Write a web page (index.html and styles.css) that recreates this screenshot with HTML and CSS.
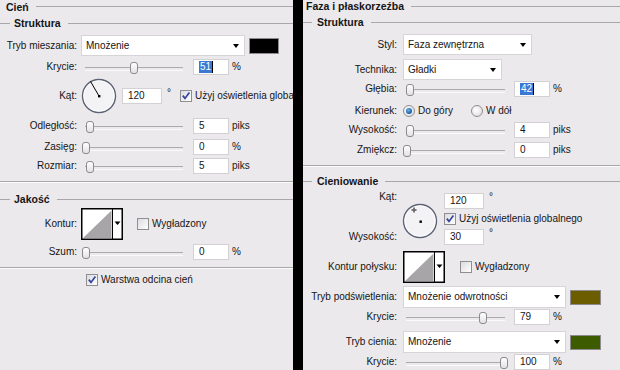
FILE: index.html
```html
<!DOCTYPE html>
<html lang="pl">
<head>
<meta charset="utf-8">
<title>Style warstwy</title>
<link rel="stylesheet" href="styles.css">
</head>
<body>
<div class="app">
  <section class="panel panel-left">
    <div class="title">Cień</div>
    <div class="group">Struktura</div>

    <div class="row r-blend">
      <span class="lbl">Tryb mieszania:</span>
      <div class="select w-blend"><span>Mnożenie</span><i class="caret"></i></div>
      <span class="swatch sw-black"></span>
    </div>

    <div class="row r-opac">
      <span class="lbl">Krycie:</span>
      <div class="slider"><span class="thumb" style="left:48px"></span></div>
      <span class="field"><span class="sel">51</span></span>
      <span class="unit">%</span>
    </div>

    <div class="row r-angle">
      <span class="lbl">Kąt:</span>
      <svg class="dial" width="36" height="36" viewBox="0 0 36 36">
        <circle cx="18" cy="18" r="16.5" fill="#f3f2f5" stroke="#5b6275" stroke-width="1.4"/>
        <circle cx="18" cy="18" r="15.2" fill="none" stroke="#ffffff" stroke-width="0.8"/>
        <line x1="18" y1="18" x2="9.5" y2="3.4" stroke="#000" stroke-width="1"/>
        <rect x="17" y="17" width="2.4" height="2.4" fill="#000"/>
      </svg>
      <span class="field w40">120</span>
      <span class="deg">°</span>
      <span class="cb on cb-global"><svg viewBox="0 0 12 12" width="12" height="12"><path d="M2.8 5.6 L5 8.4 L9.4 2.6" fill="none" stroke="#34449a" stroke-width="1.7"/></svg></span>
      <span class="cbtext">Użyj oświetlenia globalnego</span>
    </div>

    <div class="row r-dist">
      <span class="lbl">Odległość:</span>
      <div class="slider"><span class="thumb" style="left:4px"></span></div>
      <span class="field">5</span>
      <span class="unit">piks</span>
    </div>

    <div class="row r-spread">
      <span class="lbl">Zasięg:</span>
      <div class="slider"><span class="thumb" style="left:0px"></span></div>
      <span class="field">0</span>
      <span class="unit">%</span>
    </div>

    <div class="row r-size">
      <span class="lbl">Rozmiar:</span>
      <div class="slider"><span class="thumb" style="left:4px"></span></div>
      <span class="field">5</span>
      <span class="unit">piks</span>
    </div>

    <div class="sep s-left1"></div>
    <div class="group g-quality">Jakość</div>

    <div class="row r-contour">
      <span class="lbl">Kontur:</span>
      <svg class="contour" width="42" height="32" viewBox="0 0 42 32">
        <rect x="0.75" y="0.75" width="40.5" height="30.5" fill="#fff" stroke="#000" stroke-width="1.5"/>
        <polygon points="2,30 30.5,2.5 30.5,30" fill="#a7a5a8"/>
        <line x1="31.5" y1="1" x2="31.5" y2="31" stroke="#000" stroke-width="1"/>
        <polygon points="33.5,13.5 39.5,13.5 36.5,17" fill="#000"/>
      </svg>
      <span class="cb cb-smooth"></span>
      <span class="cbtext">Wygładzony</span>
    </div>

    <div class="row r-noise">
      <span class="lbl">Szum:</span>
      <div class="slider"><span class="thumb" style="left:0px"></span></div>
      <span class="field">0</span>
      <span class="unit">%</span>
    </div>

    <div class="sep s-left2"></div>

    <div class="row r-knock">
      <span class="cb on cb-knock"><svg viewBox="0 0 12 12" width="12" height="12"><path d="M2.8 5.6 L5 8.4 L9.4 2.6" fill="none" stroke="#34449a" stroke-width="1.7"/></svg></span>
      <span class="cbtext">Warstwa odcina cień</span>
    </div>
  </section>

  <div class="divider"></div>

  <section class="panel panel-right">
    <div class="title">Faza i płaskorzeźba</div>
    <div class="group">Struktura</div>

    <div class="row r-style">
      <span class="lbl">Styl:</span>
      <div class="select w-style"><span>Faza zewnętrzna</span><i class="caret"></i></div>
    </div>

    <div class="row r-tech">
      <span class="lbl">Technika:</span>
      <div class="select w-tech"><span>Gładki</span><i class="caret"></i></div>
    </div>

    <div class="row r-depth">
      <span class="lbl">Głębia:</span>
      <div class="slider"><span class="thumb" style="left:3px"></span></div>
      <span class="field"><span class="sel">42</span></span>
      <span class="unit">%</span>
    </div>

    <div class="row r-dir">
      <span class="lbl">Kierunek:</span>
      <span class="radio on"></span>
      <span class="rtext">Do góry</span>
      <span class="radio r2"></span>
      <span class="rtext">W dół</span>
    </div>

    <div class="row r-height">
      <span class="lbl">Wysokość:</span>
      <div class="slider"><span class="thumb" style="left:3px"></span></div>
      <span class="field">4</span>
      <span class="unit">piks</span>
    </div>

    <div class="row r-soft">
      <span class="lbl">Zmiękcz:</span>
      <div class="slider"><span class="thumb" style="left:0px"></span></div>
      <span class="field">0</span>
      <span class="unit">piks</span>
    </div>

    <div class="sep s-right1"></div>
    <div class="group g-shade">Cieniowanie</div>

    <div class="shade">
      <div class="shade-labels">
        <span class="lbl sl1">Kąt:</span>
        <span class="lbl sl2">Wysokość:</span>
      </div>
      <svg class="dial dial-r" width="36" height="36" viewBox="0 0 36 36">
        <circle cx="18" cy="18" r="16.5" fill="#f3f2f5" stroke="#5b6275" stroke-width="1.4"/>
        <circle cx="18" cy="18" r="15.2" fill="none" stroke="#ffffff" stroke-width="0.8"/>
        <path d="M12 4.5 V9.5 M9.5 7 H14.5" stroke="#000" stroke-width="1"/>
        <rect x="11.5" y="6.5" width="1" height="1" fill="#fff"/>
        <rect x="17.5" y="17.5" width="2.4" height="2.4" fill="#000"/>
      </svg>
      <div class="shade-ctrls">
        <div class="crow">
          <span class="field w40">120</span><span class="deg d2">°</span>
        </div>
        <div class="crow cbrow">
          <span class="cb on"><svg viewBox="0 0 12 12" width="12" height="12"><path d="M2.8 5.6 L5 8.4 L9.4 2.6" fill="none" stroke="#34449a" stroke-width="1.7"/></svg></span>
          <span class="cbtext">Użyj oświetlenia globalnego</span>
        </div>
        <div class="crow crow3">
          <span class="field w40">30</span><span class="deg d2">°</span>
        </div>
      </div>
    </div>

    <div class="row r-gloss">
      <span class="lbl">Kontur połysku:</span>
      <svg class="contour" width="42" height="32" viewBox="0 0 42 32">
        <rect x="0.75" y="0.75" width="40.5" height="30.5" fill="#fff" stroke="#000" stroke-width="1.5"/>
        <polygon points="2,30 30.5,2.5 30.5,30" fill="#a7a5a8"/>
        <line x1="31.5" y1="1" x2="31.5" y2="31" stroke="#000" stroke-width="1"/>
        <polygon points="33.5,13.5 39.5,13.5 36.5,17" fill="#000"/>
      </svg>
      <span class="cb cb-gloss"></span>
      <span class="cbtext">Wygładzony</span>
    </div>

    <div class="row r-hl">
      <span class="lbl">Tryb podświetlenia:</span>
      <div class="select w-mode"><span>Mnożenie odwrotności</span><i class="caret"></i></div>
      <span class="swatch sw-olive"></span>
    </div>

    <div class="row r-hlop">
      <span class="lbl">Krycie:</span>
      <div class="slider"><span class="thumb" style="left:76px"></span></div>
      <span class="field">79</span>
      <span class="unit">%</span>
    </div>

    <div class="row r-sh">
      <span class="lbl">Tryb cienia:</span>
      <div class="select w-mode"><span>Mnożenie</span><i class="caret"></i></div>
      <span class="swatch sw-green"></span>
    </div>

    <div class="row r-shop">
      <span class="lbl">Krycie:</span>
      <div class="slider"><span class="thumb" style="left:97px"></span></div>
      <span class="field">100</span>
      <span class="unit">%</span>
    </div>
  </section>
</div>
</body>
</html>
```

FILE: styles.css
```css
* { box-sizing: border-box; margin: 0; padding: 0; }

html, body {
  width: 620px;
  height: 370px;
  overflow: hidden;
}

body {
  font-family: "Liberation Sans", Arial, sans-serif;
  font-size: 10px;
  line-height: 12px;
  color: #151515;
  background: #ece9ec;
}

.app {
  display: flex;
  height: 370px;
}

.panel {
  background: #ece9ec;
  overflow: hidden;
  display: flex;
  flex-direction: column;
}

.panel-left { width: 293px; --lw: 81px; --lp: 4px; }
.divider { width: 10px; background: #000; flex: none; }
.panel-right { flex: 1; --lw: 100px; --lp: 6px; }

/* section headings */
.title {
  display: flex;
  align-items: center;
  height: 13px;
  font-weight: bold;
  font-size: 10.5px;
  padding-left: 6px;
  white-space: nowrap;
}
.title::after {
  content: "";
  flex: 1;
  height: 1px;
  background: #a9a7aa;
  margin-left: 7px;
}
.panel-right .title { padding-left: 3px; }

.group {
  display: flex;
  align-items: center;
  height: 12px;
  margin-top: 4px;
  font-weight: bold;
  font-size: 10.5px;
  white-space: nowrap;
}
.group::before {
  content: "";
  width: 10px;
  height: 1px;
  background: #a9a7aa;
  margin-right: 4px;
}
.group::after {
  content: "";
  flex: 1;
  height: 1px;
  background: #a9a7aa;
  margin-left: 7px;
}
.panel-right .group::before { width: 9px; margin-right: 5px; }

.sep {
  height: 2px;
  border-top: 1px solid #a9a7aa;
  border-bottom: 1px solid #fbfbfb;
}

/* rows */
.row { display: flex; align-items: center; flex: none; }
.lbl {
  width: var(--lw);
  flex: none;
  text-align: right;
  padding-right: var(--lp);
  white-space: nowrap;
}

/* left panel vertical rhythm */
.r-blend  { margin-top: 6px; height: 21px; }
.r-opac   { margin-top: 3px; height: 16px; }
.r-angle  { margin-top: 4px; height: 34px; }
.r-dist   { margin-top: 5px; height: 16px; }
.r-spread { margin-top: 5px; height: 16px; }
.r-size   { margin-top: 3px; height: 16px; }
.s-left1  { margin-top: 7px; }
.g-quality { margin-top: 10px; }
.r-contour { margin-top: 3px; height: 32px; }
.r-noise  { margin-top: 4px; height: 16px; }
.s-left2  { margin-top: 7px; }
.r-knock  { margin-top: 5px; height: 12px; padding-left: 86px; }

/* right panel vertical rhythm */
.r-style  { margin-top: 6px; height: 21px; }
.r-tech   { margin-top: 4px; height: 21px; }
.r-depth  { margin-top: 1px; height: 16px; }
.r-dir    { margin-top: 7px; height: 14px; }
.r-height { margin-top: 4px; height: 16px; }
.r-soft   { margin-top: 4px; height: 16px; }
.s-right1 { margin-top: 7px; }
.g-shade  { margin-top: 8px; }
.r-gloss  { margin-top: 6px; height: 31px; }
.r-hl     { margin-top: 4px; height: 22px; }
.r-hlop   { margin-top: 1px; height: 16px; }
.r-sh     { margin-top: 6px; height: 22px; }
.r-shop   { margin-top: 1px; height: 16px; }

/* dropdown */
.select {
  height: 100%;
  background: #fff;
  border: 1px solid #d6d4d7;
  display: flex;
  align-items: center;
  padding-left: 4px;
  position: relative;
  flex: none;
}
.select .caret {
  position: absolute;
  right: 5px;
  top: 50%;
  margin-top: -2px;
  width: 0;
  height: 0;
  border-left: 3.5px solid transparent;
  border-right: 3.5px solid transparent;
  border-top: 4px solid #000;
}
.w-blend { width: 164px; }
.w-style { width: 129px; }
.w-tech  { width: 99px; }
.w-mode  { width: 163px; }

.swatch {
  flex: none;
  margin-left: 4px;
  border: 1px solid #8d8b8e;
}
.sw-black { width: 30px; height: 16px; background: #000; }
.sw-olive { width: 31px; height: 15px; background: #6c5e00; }
.sw-green { width: 31px; height: 15px; background: #3d5b00; }

/* slider */
.slider {
  position: relative;
  flex: none;
  height: 16px;
}
.panel-left .slider { width: 104px; margin-left: 1px; }
.panel-right .slider { width: 105px; }
.slider::before {
  content: "";
  position: absolute;
  left: 3px;
  right: 3px;
  top: 8px;
  height: 2px;
  border-top: 1px solid #acaaad;
  border-bottom: 1px solid #fafafa;
}
.thumb {
  position: absolute;
  top: 3px;
  width: 8px;
  height: 12px;
  border: 1px solid #8b8a8d;
  border-radius: 3px 3px 3px 3px;
  background: linear-gradient(#ffffff, #e2e1e4);
}

/* numeric field */
.field {
  flex: none;
  width: 36px;
  height: 16px;
  background: #fff;
  border: 1px solid #d3d1d4;
  padding-left: 5px;
  line-height: 14px;
  white-space: nowrap;
}
.panel-left .slider + .field { margin-left: 7px; }
.panel-right .slider + .field { margin-left: 6px; }
.field.w40 { width: 40px; }
.sel {
  display: inline-block;
  background: #3a78d6;
  color: #fff;
  padding: 0 1px;
  line-height: 12px;
  border-right: 1px solid #000;
}
.unit { margin-left: 3px; }

/* dial */
.dial { flex: none; }
.r-angle .dial { margin-right: 5px; }
.deg {
  align-self: flex-start;
  margin-top: 8px;
  margin-left: 5px;
}

/* checkbox */
.cb {
  flex: none;
  width: 12px;
  height: 12px;
  border: 1px solid #8f8e91;
  background: linear-gradient(135deg, #dcdbe0, #ffffff);
  display: inline-flex;
  align-items: center;
  justify-content: center;
  overflow: hidden;
}
.cb svg { display: block; flex: none; }
.cbtext { margin-left: 3px; white-space: nowrap; }
.cb-global { margin-left: 9px; }
.cb-smooth { margin-left: 14px; }
.cb-gloss { margin-left: 15px; }

/* contour box */
.contour { flex: none; }

/* radio */
.radio {
  flex: none;
  width: 12px;
  height: 12px;
  border-radius: 50%;
  border: 1px solid #8f8e91;
  background: radial-gradient(circle at 40% 40%, #ffffff, #d8d7dc);
  display: inline-flex;
  align-items: center;
  justify-content: center;
}
.radio.on::after {
  content: "";
  width: 6px;
  height: 6px;
  border-radius: 50%;
  background: radial-gradient(circle at 40% 35%, #6fb2e6, #135aa3 70%, #0c3e76);
}
.rtext { margin-left: 3px; white-space: nowrap; }
.radio.r2 { margin-left: 18px; }

/* shading block */
.shade {
  display: flex;
  align-items: flex-start;
  margin-top: 2px;
  height: 56px;
  flex: none;
}
.shade-labels {
  display: flex;
  flex-direction: column;
  width: var(--lw);
  flex: none;
}
.sl1 { margin-top: 2px; }
.sl2 { margin-top: 28px; }
.dial-r { margin-top: 14px; margin-left: -1px; }
.shade-ctrls {
  margin-left: 6px;
  display: flex;
  flex-direction: column;
}
.crow { display: flex; align-items: flex-start; margin-top: 4px; }
.cbrow { align-items: center; height: 12px; }
.deg.d2 { margin-top: -2px; margin-left: 5px; }
```
